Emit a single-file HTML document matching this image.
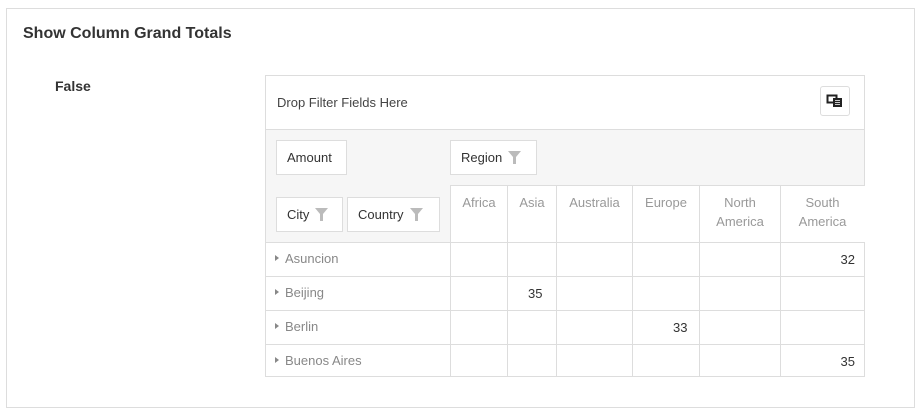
<!DOCTYPE html><html><head><style>
*{box-sizing:border-box;margin:0;padding:0}
body{width:922px;height:418px;background:#fff;font-family:"Liberation Sans",sans-serif;position:relative;overflow:hidden}
.a{position:absolute}
.outer{left:6px;top:8px;width:909px;height:400px;border:1px solid #ddd}
.t{font-size:13px;color:#333}
.btn{position:absolute;border:1px solid #ddd;background:#fff;font-size:13px;color:#333;height:35px;line-height:33px;padding-left:10px}
.f{display:inline-block;vertical-align:middle;margin-left:6px;width:13px;height:13px;margin-top:-3px}
.h{position:absolute;top:185px;height:58px;border-left:1px solid #ddd;font-size:13px;color:#999;text-align:center;padding-top:8px;line-height:19px}
.r{position:absolute;left:265px;width:600px;height:34px;border-top:1px solid #ddd}
.c{position:absolute;font-size:13px;color:#333}
.rl{position:absolute;left:10px;top:8px;font-size:13px;color:#888}
.rl:before{content:"";display:inline-block;border-left:4px solid #888;border-top:3px solid transparent;border-bottom:3px solid transparent;margin-right:6px;vertical-align:2px}
.v{position:absolute;top:0;height:100%;border-left:1px solid #ddd}
</style></head><body>
<div class="a outer"></div>
<div class="a" style="left:23px;top:25px;font-size:16px;font-weight:bold;color:#333">Show Column Grand Totals</div>
<div class="a" style="left:55px;top:78px;font-size:14px;font-weight:bold;color:#333">False</div>
<div class="a" style="left:265px;top:75px;width:600px;height:302px;border:1px solid #ddd"></div>
<div class="a" style="left:266px;top:129px;width:598px;height:113px;background:#f6f6f6;border-top:1px solid #ddd"></div>
<div class="a t" style="left:277px;top:95px;color:#444">Drop Filter Fields Here</div>
<div class="a" style="left:820px;top:86px;width:30px;height:30px;border:1px solid #ddd;border-radius:3px;background:#fff">
<svg width="30" height="30" viewBox="0 0 30 30" style="position:absolute;left:-1px;top:-1px"><rect x="7.5" y="9.5" width="9" height="7" fill="none" stroke="#222" stroke-width="2"/><rect x="13" y="12" width="9" height="9" fill="#222"/><path d="M15 14.5h5M15 16.5h5M15 18.5h5" stroke="#fff" stroke-width="0.8"/></svg></div>
<div class="btn" style="left:276px;top:140px;width:71px">Amount</div>
<div class="btn" style="left:450px;top:140px;width:87px">Region<svg class="f" viewBox="0 0 13 13"><path d="M0 0h13L8 6v7H5V6z" fill="#bbb"/></svg></div>
<div class="btn" style="left:276px;top:197px;width:67px">City<svg class="f" viewBox="0 0 13 13"><path d="M0 0h13L8 6v7H5V6z" fill="#bbb"/></svg></div>
<div class="btn" style="left:347px;top:197px;width:93px">Country<svg class="f" viewBox="0 0 13 13"><path d="M0 0h13L8 6v7H5V6z" fill="#bbb"/></svg></div>
<div class="a" style="left:450px;top:185px;width:415px;border-top:1px solid #ddd;height:58px;background:#fff"></div>
<div class="h" style="left:450px;width:57px">Africa</div>
<div class="h" style="left:507px;width:49px">Asia</div>
<div class="h" style="left:556px;width:76px">Australia</div>
<div class="h" style="left:632px;width:67px">Europe</div>
<div class="h" style="left:699px;width:81px">North<br>America</div>
<div class="h" style="left:780px;width:84px">South<br>America</div>
<div class="r" style="top:242px"><div class="rl">Asuncion</div><div class="c" style="right:10px;top:9px">32</div></div>
<div class="r" style="top:276px"><div class="rl">Beijing</div><div class="c" style="left:263px;top:9px">35</div></div>
<div class="r" style="top:310px"><div class="rl">Berlin</div><div class="c" style="left:408px;top:9px">33</div></div>
<div class="r" style="top:344px"><div class="rl">Buenos Aires</div><div class="c" style="right:10px;top:9px">35</div></div>
<div class="a" style="left:265px;top:242px;width:600px;height:135px">
<div class="v" style="left:185px"></div><div class="v" style="left:242px"></div><div class="v" style="left:291px"></div><div class="v" style="left:367px"></div><div class="v" style="left:434px"></div><div class="v" style="left:515px"></div></div>
</body></html>
